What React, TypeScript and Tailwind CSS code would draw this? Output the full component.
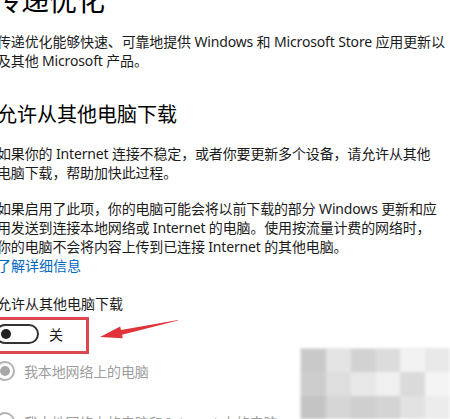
import React from 'react';

const font = { fontFamily: '"Noto Sans", "Noto Sans CJK SC", sans-serif' };

const Lines = ({ lines, className }: { lines: string[]; className?: string }) => (
    <p className={`whitespace-nowrap text-[14px] leading-[19px] tracking-[-0.15px] ${className ?? ''}`}>
        {lines.map((l, i) => (
            <span key={i} className="block">{l}</span>
        ))}
    </p>
);

const Radio = ({ checked, label }: { checked?: boolean; label: string }) => (
    <div className="flex items-center gap-[9px] -ml-[2px]">
        <span className="flex h-[20px] w-[20px] items-center justify-center rounded-full border-2 border-[#b4b4b4]">
            {checked && <span className="h-[10px] w-[10px] rounded-full bg-[#a8a8a8]" />}
        </span>
        <span className="text-[14px] leading-[19px] tracking-[-0.15px] text-[#9e9e9e] whitespace-nowrap">{label}</span>
    </div>
);

export default function App() {
    return (
        <div className="relative h-[419px] w-[450px] overflow-hidden bg-white text-[#1b1b1b]" style={font}>
            <div className="-ml-[3px] flex flex-col">
                {/* page title */}
                <h1 className="-mt-[14px] -ml-[4px] text-[28px] leading-[28px] text-black whitespace-nowrap">传递优化</h1>

                <Lines
                    className="mt-[18px]"
                    lines={[
                        '传递优化能够快速、可靠地提供 Windows 和 Microsoft Store 应用更新以',
                        '及其他 Microsoft 产品。',
                    ]}
                />

                <h2 className="mt-[31px] text-[20px] leading-[28px] text-black whitespace-nowrap">允许从其他电脑下载</h2>

                <Lines
                    className="mt-[15px]"
                    lines={[
                        '如果你的 Internet 连接不稳定，或者你要更新多个设备，请允许从其他',
                        '电脑下载，帮助加快此过程。',
                    ]}
                />

                <Lines
                    className="mt-[17px]"
                    lines={[
                        '如果启用了此项，你的电脑可能会将以前下载的部分 Windows 更新和应',
                        '用发送到连接本地网络或 Internet 的电脑。使用按流量计费的网络时，',
                        '你的电脑不会将内容上传到已连接 Internet 的其他电脑。',
                    ]}
                />
                <a className="text-[14px] leading-[19px] text-[#0067c0]">了解详细信息</a>

                <div className="mt-[19px] text-[14px] leading-[19px] whitespace-nowrap">允许从其他电脑下载</div>

                {/* toggle with highlight box and arrow */}
                <div className="relative mt-[11px] flex h-[20px] items-center -ml-[2px]">
                    <span className="flex h-[20px] w-[44px] shrink-0 items-center rounded-full border-2 border-[#333] px-[4px]">
                        <span className="h-[10px] w-[10px] rounded-full bg-[#222]" />
                    </span>
                    <span className="ml-[10px] text-[14px] leading-[19px]">关</span>

                    <span className="absolute -left-[10px] -top-[7px] h-[37px] w-[104px] border-[3px] border-[#d9474f]" />
                    <svg className="absolute left-0 top-[-10px] overflow-visible" width="200" height="40">
                        <polygon
                            fill="#e0343a"
                            points="105,23 127.8,24.2 127,20.7 183,6.5 183,6 126,16 125.2,12.5"
                        />
                    </svg>
                </div>

                <div className="mt-[17px] flex flex-col gap-[31px]">
                    <Radio checked label="我本地网络上的电脑" />
                    <Radio label="我本地网络上的电脑和 Internet 上的电脑" />
                </div>
            </div>

            {/* blurred patch in the lower right corner */}
            <div className="absolute left-[300px] top-[348px] grid h-[71px] w-[150px] grid-cols-6 grid-rows-3 border-l border-t border-[#e6e6e6] blur-[1.5px]">
                <div className="bg-[#c9c9c9]" />
                <div className="bg-[#e4e4e4]" />
                <div className="bg-[#d2d2d2]" />
                <div className="bg-[#dcdcdc]" />
                <div className="bg-[#f2f2f2]" />
                <div className="bg-[#e9e9e9]" />
                <div className="bg-[#cdcdcd]" />
                <div className="bg-[#dedede]" />
                <div className="bg-[#e8e8e8]" />
                <div className="bg-[#f0f0f0]" />
                <div className="bg-[#dadada]" />
                <div className="bg-[#f4f4f4]" />
                <div className="bg-[#c4c4c4]" />
                <div className="bg-[#d6d6d6]" />
                <div className="bg-[#cfcfcf]" />
                <div className="bg-[#d4d4d4]" />
                <div className="bg-[#e2e2e2]" />
                <div className="bg-[#ececec]" />
            </div>
        </div>
    );
}
